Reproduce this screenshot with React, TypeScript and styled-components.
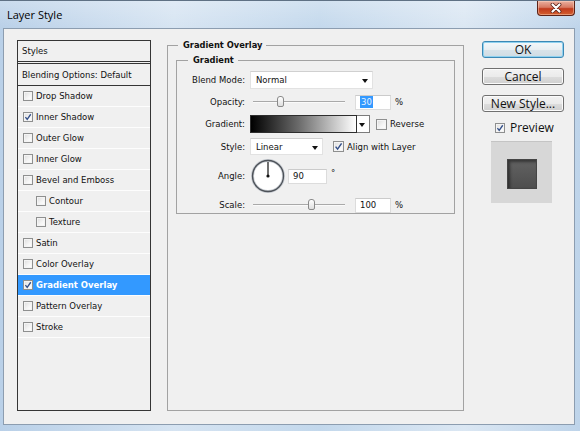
import styled, { createGlobalStyle } from 'styled-components';

const GlobalStyle = createGlobalStyle`
  html, body {
    margin: 0;
    padding: 0;
  }
  body {
    width: 580px;
    height: 431px;
    overflow: hidden;
    background: #a9c6e2;
  }
  * {
    box-sizing: border-box;
  }
`;

const uiFont = `"DejaVu Sans", Tahoma, Verdana, sans-serif`;
const vistaFont = `"Open Sans", "Segoe UI", Arial, sans-serif`;

const styleItems = [
  { label: 'Drop Shadow' },
  { label: 'Inner Shadow', checked: true },
  { label: 'Outer Glow' },
  { label: 'Inner Glow' },
  { label: 'Bevel and Emboss' },
  { label: 'Contour', indent: true },
  { label: 'Texture', indent: true },
  { label: 'Satin' },
  { label: 'Color Overlay' },
  { label: 'Gradient Overlay', checked: true, active: true },
  { label: 'Pattern Overlay' },
  { label: 'Stroke' },
];

const Check = ({ checked, size = 10 }: { checked?: boolean; size?: number }) => (
  <CheckBox $size={size}>
    {checked && (
      <svg width={size - 2} height={size - 2} viewBox="0 0 9 9">
        <path d="M1.6 4.6 L3.6 7.1 L7.6 1.4" fill="none" stroke="#34508a" strokeWidth="1.5" />
      </svg>
    )}
  </CheckBox>
);

const Slider = ({ frac }: { frac: number }) => (
  <SliderTrack>
    <SliderLine />
    <SliderThumb style={{ left: `${Math.round(frac * 92) - 1}px` }} />
  </SliderTrack>
);

const App = () => {
  return (
    <>
      <GlobalStyle />
      <Window>
        <TitleBar>
          <Title>Layer Style</Title>
          <CloseButton>
            <svg width="14" height="10" viewBox="0 0 14 10">
              <path d="M3.5 1.5 L10.5 8.5 M10.5 1.5 L3.5 8.5" stroke="#5b2218" strokeWidth="3.8" strokeLinecap="round" />
              <path d="M3.5 1.5 L10.5 8.5 M10.5 1.5 L3.5 8.5" stroke="#ffffff" strokeWidth="2.2" strokeLinecap="round" />
            </svg>
          </CloseButton>
        </TitleBar>
        <Client>
          <StyleList>
            <ListHeader>Styles</ListHeader>
            <ListBlending>Blending Options: Default</ListBlending>
            {styleItems.map((item) => (
              <ListRow key={item.label} $indent={item.indent} $active={item.active}>
                <Check checked={item.checked} />
                <span>{item.label}</span>
              </ListRow>
            ))}
          </StyleList>

          <Group>
            <Legend $offset={2}>Gradient Overlay</Legend>
            <Group $inner>
              <Legend $offset={11}>Gradient</Legend>
              <FormGrid>
                <FieldLabel>Blend Mode:</FieldLabel>
                <Cell>
                  <Select $width={123}>
                    Normal
                    <Arrow />
                  </Select>
                </Cell>

                <FieldLabel>Opacity:</FieldLabel>
                <Cell>
                  <Slider frac={0.3} />
                  <NumberBox>
                    <Selected>30</Selected>
                  </NumberBox>
                  <Unit>%</Unit>
                </Cell>

                <FieldLabel>Gradient:</FieldLabel>
                <Cell>
                  <GradientBar />
                  <DropButton>
                    <Arrow />
                  </DropButton>
                  <CheckLabel $gap={6}>
                    <Check size={11} />
                    Reverse
                  </CheckLabel>
                </Cell>

                <FieldLabel>Style:</FieldLabel>
                <Cell>
                  <Select $width={73}>
                    Linear
                    <Arrow />
                  </Select>
                  <CheckLabel $gap={10}>
                    <Check checked size={11} />
                    Align with Layer
                  </CheckLabel>
                </Cell>

                <FieldLabel>Angle:</FieldLabel>
                <Cell>
                  <Dial width="34" height="34" viewBox="0 0 34 34">
                    <circle cx="17" cy="17" r="15.5" fill="#ffffff" stroke="#c8ccd2" strokeWidth="3" />
                    <circle cx="17" cy="17" r="15.5" fill="none" stroke="#4d5258" strokeWidth="1.3" />
                    <line x1="17" y1="17" x2="17" y2="3" stroke="#111" strokeWidth="1.2" />
                    <circle cx="17" cy="17" r="1.6" fill="#111" />
                  </Dial>
                  <NumberBox $width={39}>90</NumberBox>
                  <Degree>°</Degree>
                </Cell>

                <FieldLabel>Scale:</FieldLabel>
                <Cell>
                  <Slider frac={0.64} />
                  <NumberBox>100</NumberBox>
                  <Unit>%</Unit>
                </Cell>
              </FormGrid>
            </Group>
          </Group>

          <ButtonColumn>
            <DialogButton $primary>OK</DialogButton>
            <DialogButton>Cancel</DialogButton>
            <DialogButton>New Style...</DialogButton>
            <PreviewToggle>
              <Check checked size={10} />
              Preview
            </PreviewToggle>
            <PreviewBox>
              <PreviewSwatch />
            </PreviewBox>
          </ButtonColumn>
        </Client>
      </Window>
    </>
  );
};

export default App;

const Window = styled.div`
  width: 580px;
  height: 431px;
  display: flex;
  flex-direction: column;
  padding: 0 5px 6px 3px;
  border-top: 1px solid #5f7184;
  background:
    linear-gradient(180deg, rgba(255, 255, 255, 0.25) 0px, rgba(255, 255, 255, 0) 28px),
    linear-gradient(90deg, #b9d0e8 0%, #d6e4f2 30%, #c3d8ec 55%, #dbe7f3 80%, #bed4ea 100%);
`;

const TitleBar = styled.div`
  height: 27px;
  display: flex;
  justify-content: space-between;
  align-items: flex-start;
`;

const Title = styled.div`
  padding-left: 4px;
  line-height: 27px;
  font-family: ${vistaFont};
  font-size: 11px;
  color: #000;
`;

const CloseButton = styled.div`
  width: 38px;
  height: 15px;
  display: flex;
  align-items: center;
  justify-content: center;
  border: 1px solid #5c2217;
  border-top: none;
  border-radius: 0 0 4px 4px;
  background: linear-gradient(180deg, #eab0a0 0%, #d77a63 45%, #c13b1e 55%, #d4602f 100%);
  box-shadow: inset 0 0 0 1px rgba(255, 220, 200, 0.45);
`;

const Client = styled.div`
  flex: 1;
  display: flex;
  align-items: stretch;
  padding: 11px 10px 13px 13px;
  background: #f0f0f0;
  border: 1px solid #8c9db0;
  font-family: ${uiFont};
  font-size: 8.5px;
  color: #111;
`;

const StyleList = styled.div`
  width: 134px;
  flex-shrink: 0;
  display: flex;
  flex-direction: column;
  border: 1px solid #353535;
  background: #f0f0f0;
`;

const ListHeader = styled.div`
  height: 23px;
  display: flex;
  align-items: center;
  padding-left: 4px;
  border-bottom: 3px double #353535;
`;

const ListBlending = styled.div`
  height: 22px;
  display: flex;
  align-items: center;
  padding-left: 4px;
  border-bottom: 1px solid #353535;
`;

const ListRow = styled.div<{ $indent?: boolean; $active?: boolean }>`
  height: 21px;
  display: flex;
  align-items: center;
  gap: 3px;
  padding-left: ${(p) => (p.$indent ? 18 : 5)}px;
  border-bottom: 1px solid #fdfdfd;
  background: ${(p) => (p.$active ? '#3399ff' : 'transparent')};
  color: ${(p) => (p.$active ? '#ffffff' : '#111')};
  font-weight: ${(p) => (p.$active ? 'bold' : 'normal')};
`;

const CheckBox = styled.span<{ $size: number }>`
  width: ${(p) => p.$size}px;
  height: ${(p) => p.$size}px;
  flex-shrink: 0;
  display: inline-flex;
  align-items: center;
  justify-content: center;
  border: 1px solid #8e8f8f;
  background: linear-gradient(135deg, #dcdcdc 0%, #f6f6f6 60%, #ffffff 100%);
  box-shadow: inset 0 0 0 1px #f4f4f4;
`;

const Group = styled.fieldset<{ $inner?: boolean }>`
  margin: 0 0 0 ${(p) => (p.$inner ? 0 : 16)}px;
  width: ${(p) => (p.$inner ? 'auto' : '297px')};
  flex-shrink: 0;
  min-width: 0;
  padding: ${(p) => (p.$inner ? '6px 0 0 0' : '5px 8px 0 8px')};
  border: 1px solid #a2a2a2;
`;

const Legend = styled.legend<{ $offset: number }>`
  margin-left: ${(p) => p.$offset}px;
  padding: 0 4px 0 5px;
  line-height: 10px;
  font-size: 8.3px;
  font-weight: bold;
  color: #111;
`;

const FormGrid = styled.div`
  display: grid;
  grid-template-columns: 68px auto;
  grid-template-rows: 18px 16px 18px 17px 32px 16px;
  column-gap: 5px;
  row-gap: 5px;
`;

const FieldLabel = styled.div`
  display: flex;
  align-items: center;
  justify-content: flex-end;
  white-space: nowrap;
`;

const Cell = styled.div`
  display: flex;
  align-items: center;
`;

const Select = styled.div<{ $width: number }>`
  position: relative;
  width: ${(p) => p.$width}px;
  height: 100%;
  display: flex;
  align-items: center;
  padding-left: 5px;
  background: #ffffff;
  border: 1px solid #e2e2e2;
  border-top-color: #d0d0d0;
`;

const Arrow = styled.span`
  position: absolute;
  right: 4px;
  top: 50%;
  margin-top: -1px;
  width: 0;
  height: 0;
  border-left: 3.5px solid transparent;
  border-right: 3.5px solid transparent;
  border-top: 4px solid #111;
`;

const SliderTrack = styled.div`
  position: relative;
  width: 98px;
  height: 100%;
  margin-right: 7px;
`;

const SliderLine = styled.div`
  margin: 7px 3px 0 3px;
  height: 2px;
  border-top: 1px solid #a9a9a9;
  border-bottom: 1px solid #fafafa;
`;

const SliderThumb = styled.div`
  position: absolute;
  top: 2px;
  width: 7px;
  height: 11px;
  border: 1px solid #8a8a8a;
  border-radius: 3px 3px 2px 2px;
  background: linear-gradient(180deg, #ffffff, #dedede);
`;

const NumberBox = styled.div<{ $width?: number }>`
  width: ${(p) => p.$width ?? 36}px;
  height: 15px;
  display: flex;
  align-items: center;
  padding-left: 4px;
  background: #ffffff;
  border: 1px solid #dcdcdc;
  border-top-color: #cbcbcb;
`;

const Selected = styled.span`
  background: #3399ff;
  color: #e8f2ff;
  padding: 0 1px;
  line-height: 12px;
`;

const Unit = styled.span`
  margin-left: 4px;
`;

const Degree = styled.span`
  align-self: flex-start;
  margin: 8px 0 0 4px;
`;

const GradientBar = styled.div`
  width: 107px;
  height: 100%;
  border: 1px solid #2e2e2e;
  background: linear-gradient(90deg, #000000 0%, #6a6a6a 45%, #ffffff 100%);
`;

const DropButton = styled.div`
  position: relative;
  width: 13px;
  height: 100%;
  background: #ffffff;
  border: 1px solid #7c7c7c;
  border-left: none;
`;

const CheckLabel = styled.label<{ $gap: number }>`
  display: flex;
  align-items: center;
  gap: 3px;
  margin-left: ${(p) => p.$gap}px;
  white-space: nowrap;
`;

const Dial = styled.svg`
  margin-left: 1px;
  margin-right: 3px;
`;

const ButtonColumn = styled.div`
  width: 82px;
  flex-shrink: 0;
  margin: 1px 0 0 18px;
  display: flex;
  flex-direction: column;
  align-self: flex-start;
  font-family: ${vistaFont};
  font-size: 12px;
`;

const DialogButton = styled.div<{ $primary?: boolean }>`
  height: 17px;
  margin-bottom: 10px;
  display: flex;
  align-items: center;
  justify-content: center;
  border: 1px solid ${(p) => (p.$primary ? '#3b88b5' : '#707070')};
  border-radius: 3px;
  background: ${(p) =>
    p.$primary
      ? 'linear-gradient(180deg, #f4f8fa 0%, #e8eef2 50%, #d9e3e9 51%, #cfdce4 100%)'
      : 'linear-gradient(180deg, #f2f2f2 0%, #ebebeb 50%, #dddddd 51%, #cfcfcf 100%)'};
  box-shadow: inset 0 0 0 1px ${(p) => (p.$primary ? '#8fd1ef' : '#fbfbfb')};
  color: #111;
  line-height: 15px;
`;

const PreviewToggle = styled.label`
  display: flex;
  align-items: center;
  gap: 5px;
  margin: 0 0 7px 13px;
  line-height: 12px;
`;

const PreviewBox = styled.div`
  width: 61px;
  height: 62px;
  margin-left: 9px;
  padding: 17px 0 0 16px;
  background: #d7d7d7;
  border-top: 1px solid #c4c4c4;
`;

const PreviewSwatch = styled.div`
  width: 30px;
  height: 30px;
  border: 1px solid #454545;
  background: linear-gradient(180deg, #626262 0%, #4e4e4e 100%);
  box-shadow: inset 2px 2px 3px rgba(0, 0, 0, 0.45);
`;
